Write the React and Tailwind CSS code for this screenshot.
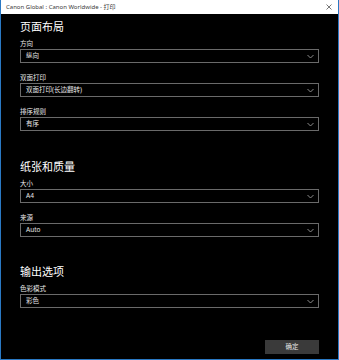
import React from 'react'

const SECTIONS = [
  {
    title: '页面布局',
    mt: 'mt-[5px]',
    fields: [
      { label: '方向', value: '纵向' },
      { label: '双面打印', value: '双面打印(长边翻转)' },
      { label: '排序规则', value: '有序' },
    ],
  },
  {
    title: '纸张和质量',
    mt: 'mt-[28px]',
    fields: [
      { label: '大小', value: 'A4' },
      { label: '来源', value: 'Auto' },
    ],
  },
  {
    title: '输出选项',
    mt: 'mt-[27px]',
    fields: [{ label: '色彩模式', value: '彩色' }],
  },
]

function Chevron() {
  return (
    <svg width="7" height="5" viewBox="0 0 7 5" className="shrink-0">
      <polyline points="0.5,1 3.5,4 6.5,1" fill="none" stroke="#9a9a9a" strokeWidth="0.9" />
    </svg>
  )
}

function Field({ label, value, first }) {
  return (
    <div className={first ? '' : 'mt-[10px]'}>
      <div className="h-[10px] text-[6.5px] leading-[10px] text-[#e8e8e8]">{label}</div>
      <div className="h-[14px] border border-[#6a6a6a] flex items-center justify-between pl-[5px] pr-[4px]">
        <span className="text-[6.5px] leading-[12px] text-[#e8e8e8]">{value}</span>
        <Chevron />
      </div>
    </div>
  )
}

export default function App() {
  return (
    <div
      className="w-[339px] h-[360px] bg-black border-x border-b border-[#2a79c4] flex flex-col overflow-hidden"
      style={{ fontFamily: '"Noto Sans", "Noto Sans CJK SC", sans-serif' }}
    >
      {/* ── Title bar ───────────────────────────────────── */}
      <div className="h-[14px] shrink-0 bg-white flex items-center justify-between pl-[5px] pr-[6px]">
        <span className="text-[6px] leading-[14px] text-[#3a3a3a]">Canon Global : Canon Worldwide - 打印</span>
        <svg width="6" height="6" viewBox="0 0 6 6">
          <path d="M0.5 0.5 L5.5 5.5 M5.5 0.5 L0.5 5.5" stroke="#555" strokeWidth="0.8" />
        </svg>
      </div>

      {/* ── Settings ────────────────────────────────────── */}
      <div className="px-[19px] flex flex-col">
        {SECTIONS.map((s) => (
          <div key={s.title} className={s.mt}>
            <div className="h-[16px] text-[11px] leading-[16px] text-white mb-[4px]">{s.title}</div>
            {s.fields.map((f, i) => (
              <Field key={f.label} label={f.label} value={f.value} first={i === 0} />
            ))}
          </div>
        ))}
      </div>

      {/* ── Footer ──────────────────────────────────────── */}
      <div className="mt-auto flex justify-end pr-[19px] pb-[5px]">
        <button className="w-[54px] h-[14px] bg-[#3a3a3a] text-[6.5px] leading-[14px] text-[#e8e8e8]">确定</button>
      </div>
    </div>
  )
}
